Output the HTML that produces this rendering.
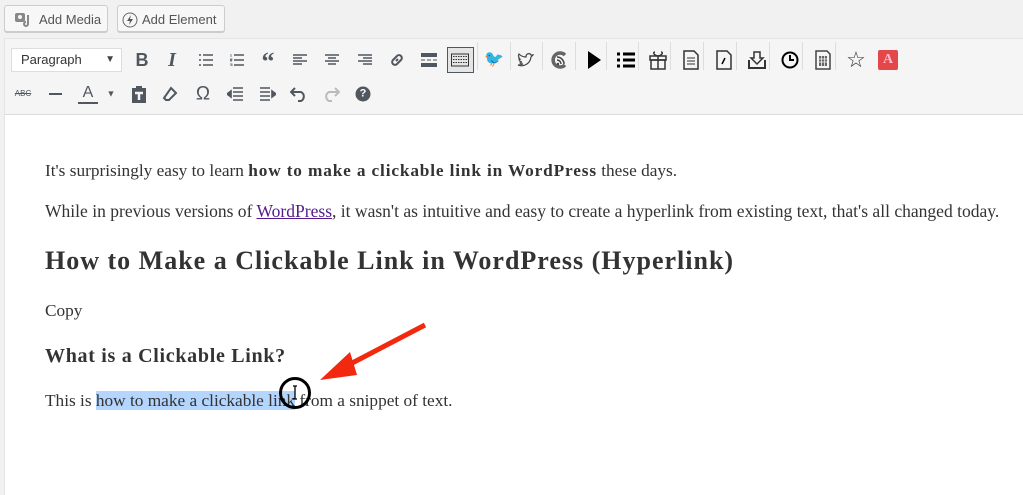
<!DOCTYPE html>
<html><head><meta charset="utf-8"><style>
body{margin:0;width:1023px;height:489px;background:#f1f1f1;font-family:"Liberation Sans",sans-serif;position:relative;overflow:hidden}
.btn{position:absolute;top:5px;height:27px;border:1px solid #ccc;border-radius:3px;background:#f7f7f7;box-shadow:0 1px 0 #ccc;font-size:13px;color:#555;line-height:27px;box-sizing:border-box}
.tb{position:absolute;left:4px;top:38px;width:1030px;height:77px;background:#f5f5f5;border:1px solid #e2e4e7;box-sizing:border-box}
.ed{position:absolute;left:4px;top:114px;width:1030px;height:380px;background:#fff;border-left:1px solid #e2e4e7;border-top:1px solid #dcdcde}
.i{position:absolute;transform:translate(-50%,-50%);color:#50575e;font-size:17px;line-height:1;text-align:center}
.sep{position:absolute;top:42px;width:1px;height:28px;background:#ddd}
.t{position:absolute;left:45px;font-family:"Liberation Serif",serif;color:#333;font-size:17.3px;white-space:nowrap}
.t b{letter-spacing:0.85px}
</style></head><body>
<div class="btn" style="left:4px;width:104px;padding-left:34px">Add Media
<svg style="position:absolute;left:9px;top:6px" width="18" height="16"><rect x="1" y="1" width="10" height="9" rx="2" fill="#888"/><circle cx="6" cy="5" r="2" fill="#f7f7f7"/><path d="M14 3v9a2 2 0 1 1-2-2" stroke="#888" stroke-width="2" fill="none"/></svg></div>
<div class="btn" style="left:117px;width:108px;padding-left:24px">Add Element
<svg style="position:absolute;left:4px;top:6px" width="16" height="16"><circle cx="8" cy="8" r="7" fill="none" stroke="#666"/><path d="M9 3L5 9h3l-1 4 4-6H8z" fill="#555"/></svg></div>
<div class="tb"></div>
<div style="position:absolute;left:11px;top:48px;width:111px;height:24px;background:#fff;border:1px solid #ddd;box-sizing:border-box;font-size:13px;color:#333;line-height:22px;padding-left:9px">Paragraph<span style="position:absolute;right:6px;font-size:10px;color:#444">▼</span></div>
<div class="i" style="left:142px;top:60px;font-weight:bold;font-size:18px">B</div>
<div class="i" style="left:172px;top:60px;font-style:italic;font-family:'Liberation Serif';font-size:20px;font-weight:bold">I</div>
<svg class="i" style="left:206px;top:60px" width="14" height="12"><path d="M0 1h2M0 6h2M0 11h2M4 1h10M4 6h10M4 11h10" stroke="#50575e" stroke-width="1.6"/></svg>
<svg class="i" style="left:237px;top:60px" width="14" height="12"><path d="M4 1h10M4 6h10M4 11h10" stroke="#50575e" stroke-width="1.4"/><path d="M1 0v3M0 5h2v1H0v1h2M0 10h2v2H0" stroke="#50575e" stroke-width=".7" fill="none"/></svg>
<div class="i" style="left:268px;top:62px;font-size:26px;font-weight:bold;font-family:'Liberation Serif'">“</div>
<svg class="i" style="left:300px;top:60px" width="14" height="12"><path d="M0 1h14M0 4h9M0 7h14M0 10h9" stroke="#50575e" stroke-width="1.6"/></svg>
<svg class="i" style="left:332px;top:60px" width="14" height="12"><path d="M0 1h14M3 4h8M0 7h14M3 10h8" stroke="#50575e" stroke-width="1.6"/></svg>
<svg class="i" style="left:365px;top:60px" width="14" height="12"><path d="M0 1h14M5 4h9M0 7h14M5 10h9" stroke="#50575e" stroke-width="1.6"/></svg>
<svg class="i" style="left:397px;top:60px" width="16" height="16"><path d="M7 9l2-2M6 6l2-2a2.5 2.5 0 0 1 4 4l-2 2M10 10l-2 2a2.5 2.5 0 0 1-4-4l2-2" stroke="#50575e" stroke-width="2" fill="none"/></svg>
<svg class="i" style="left:429px;top:60px" width="16" height="14"><rect y="0" width="16" height="4" fill="#50575e"/><rect y="10" width="16" height="4" fill="#50575e"/><path d="M0 7h4M6 7h4M12 7h4" stroke="#50575e"/></svg>
<div style="position:absolute;left:447px;top:47px;width:27px;height:26px;border:1px solid #50575e;background:#e5e5e5;box-sizing:border-box"></div>
<svg class="i" style="left:460px;top:60px" width="18" height="13"><rect x="0.5" y="0.5" width="17" height="12" fill="none" stroke="#333"/><path d="M2 3h14M2 6h14M2 9h14" stroke="#333" stroke-dasharray="1.5 1"/></svg>
<div class="sep" style="left:477px"></div>
<div class="i" style="left:494px;top:60px;color:#8ec1ea;font-size:16px">🐦</div>
<div class="sep" style="left:510px"></div>
<svg class="i" style="left:526px;top:60px" width="20" height="18"><path d="M2 14c4 2 12 0 13-8l2-2-2 0c-1-2-5-2-5 2C6 6 4 4 3 3c-1 2 0 4 1 5-1 0-1 0-1 0 0 2 2 3 3 3l-2 1c1 1 2 1 3 1-2 1-3 1-5 1z" fill="none" stroke="#444" stroke-width="1.2"/></svg>
<div class="sep" style="left:542px"></div>
<svg class="i" style="left:559px;top:60px" width="18" height="18"><path d="M15 4A7 7 0 1 0 15 14" stroke="#666" stroke-width="3.5" fill="none"/><circle cx="8" cy="13" r="1.2" fill="#444"/><path d="M7 9a4 4 0 0 1 4 4M7 6a7 7 0 0 1 7 7" stroke="#444" stroke-width="1.5" fill="none"/></svg>
<div class="sep" style="left:575px"></div>
<svg class="i" style="left:594px;top:60px" width="14" height="18"><path d="M1 0l13 9-13 9z" fill="#000"/></svg>
<div class="sep" style="left:606px"></div>
<svg class="i" style="left:626px;top:60px" width="18" height="16"><path d="M0 2h3M6 2h12M0 8h3M6 8h12M0 14h3M6 14h12" stroke="#000" stroke-width="3"/></svg>
<div class="sep" style="left:638px"></div>
<svg class="i" style="left:658px;top:60px" width="20" height="20"><rect x="2" y="6" width="16" height="4" fill="none" stroke="#333" stroke-width="1.5"/><rect x="3" y="10" width="14" height="9" fill="none" stroke="#333" stroke-width="1.5"/><path d="M10 6v13M7 2c-2 0-2 3 3 4 5-1 5-4 3-4" fill="none" stroke="#333" stroke-width="1.5"/></svg>
<div class="sep" style="left:670px"></div>
<svg class="i" style="left:691px;top:60px" width="16" height="20"><path d="M1 1h10l4 4v14H1z" fill="none" stroke="#333" stroke-width="1.5"/><path d="M4 8h8M4 11h8M4 14h8" stroke="#333"/></svg>
<div class="sep" style="left:703px"></div>
<svg class="i" style="left:724px;top:60px" width="16" height="20"><path d="M1 1h10l4 4v14H1z" fill="none" stroke="#333" stroke-width="1.5"/><path d="M6 14l3-6" stroke="#000" stroke-width="1.5"/></svg>
<div class="sep" style="left:736px"></div>
<svg class="i" style="left:757px;top:60px" width="20" height="20"><path d="M2 10v8h16v-8" fill="none" stroke="#333" stroke-width="2"/><path d="M7 2h6v6h3l-6 6-6-6h3z" fill="none" stroke="#333" stroke-width="1.5"/></svg>
<div class="sep" style="left:769px"></div>
<svg class="i" style="left:790px;top:60px" width="18" height="18"><circle cx="9" cy="9" r="7.5" fill="none" stroke="#000" stroke-width="2"/><path d="M9 4v5h4" fill="none" stroke="#000" stroke-width="2"/></svg>
<div class="sep" style="left:802px"></div>
<svg class="i" style="left:823px;top:60px" width="16" height="20"><path d="M1 1h11l3 3v15H1z" fill="none" stroke="#444" stroke-width="1.5"/><rect x="4" y="6" width="8" height="10" fill="#666"/><path d="M4 9h8M4 12h8M6.5 6v10M9.5 6v10" stroke="#fff" stroke-width=".7"/></svg>
<div class="sep" style="left:835px"></div>
<div class="i" style="left:856px;top:60px;font-size:22px;color:#333">☆</div>
<div class="i" style="left:888px;top:60px;width:20px;height:20px;background:#e3474a;border-radius:2px;color:#fbc;font-family:'Liberation Serif';font-weight:bold;font-size:14px;line-height:20px">A</div>
<div class="i" style="left:23px;top:94px;font-size:8px;color:#50575e;text-decoration:line-through">ABC</div>
<div style="position:absolute;left:49px;top:93px;width:13px;height:2px;background:#50575e"></div>
<div class="i" style="left:88px;top:93px;font-size:16px">A</div>
<div style="position:absolute;left:78px;top:102px;width:20px;height:2px;background:#50575e"></div>
<div class="i" style="left:111px;top:94px;font-size:9px">▼</div>
<svg class="i" style="left:139px;top:94px" width="16" height="18"><path d="M1 3h4V1h6v2h4v15H1z" fill="#50575e"/><path d="M4 8h8M8 8v7" stroke="#f5f5f5" stroke-width="2.5"/></svg>
<svg class="i" style="left:170px;top:94px" width="16" height="16"><path d="M9 2l5 5-7 7H4L2 12z" fill="none" stroke="#50575e" stroke-width="2"/></svg>
<div class="i" style="left:203px;top:94px;font-size:19px">Ω</div>
<svg class="i" style="left:235px;top:94px" width="16" height="14"><path d="M6 1h10M6 5h10M6 9h10M6 13h10M0 7l4-3v6z" stroke="#50575e" stroke-width="1.6" fill="#50575e"/></svg>
<svg class="i" style="left:268px;top:94px" width="16" height="14"><path d="M0 1h10M0 5h10M0 9h10M0 13h10M16 7l-4-3v6z" stroke="#50575e" stroke-width="1.6" fill="#50575e"/></svg>
<svg class="i" style="left:299px;top:94px" width="18" height="16"><path d="M5 2L1 6l4 4M1 6h10a5 5 0 0 1 0 9H8" stroke="#50575e" stroke-width="2" fill="none"/></svg>
<svg class="i" style="left:331px;top:94px" width="18" height="16"><path d="M13 2l4 4-4 4M17 6H7a5 5 0 0 0 0 9h3" stroke="#bbb" stroke-width="2" fill="none"/></svg>
<div class="i" style="left:363px;top:94px;width:15px;height:15px;border-radius:50%;background:#50575e;color:#fff;font-size:11px;font-weight:bold;line-height:15px">?</div>
<div class="ed"></div>
<div class="t" style="top:161px">It's surprisingly easy to learn <b>how to make a clickable link in WordPress</b> these days.</div>
<div class="t" style="top:201px;font-size:17.55px">While in previous versions of <span style="color:#551a8b;text-decoration:underline">WordPress</span>, it wasn't as intuitive and easy to create a hyperlink from existing text, that's all changed today.</div>
<div class="t" style="top:246px;font-size:26px;font-weight:bold;letter-spacing:1px">How to Make a Clickable Link in WordPress (Hyperlink)</div>
<div class="t" style="top:301px">Copy</div>
<div class="t" style="top:345px;font-size:20px;font-weight:bold;letter-spacing:0.7px">What is a Clickable Link?</div>
<div class="t" style="top:391px">This is <span style="background:#b4d5fe">how to make a clickable link</span> from a snippet of text.</div>
<svg style="position:absolute;left:275px;top:320px" width="160" height="92"><path d="M150 5L60 52" stroke="#f2290f" stroke-width="5"/><path d="M45 60L75 32L82 55z" fill="#f2290f"/><circle cx="20" cy="73" r="14.5" fill="none" stroke="#000" stroke-width="3"/><path d="M18 66h4M20 66v13M18 79h4" stroke="#000" stroke-width="1.3"/></svg>
</body></html>
